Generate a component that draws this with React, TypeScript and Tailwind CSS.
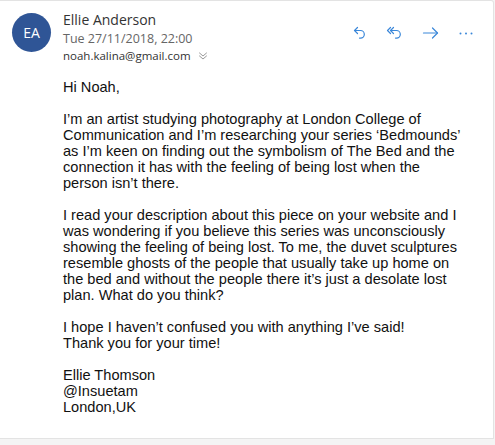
import React from "react";

const ReplyIcon = () => (
  <svg width="16" height="16" viewBox="0 0 16 16" fill="none" stroke="currentColor" strokeWidth="1.2" strokeLinecap="round" strokeLinejoin="round">
    <path d="M5.5 2.5 2.5 5.5l3 3" />
    <path d="M2.5 5.5h6a3.8 3.8 0 0 1 0 7.6H7.5" />
  </svg>
);

const ReplyAllIcon = () => (
  <svg width="18" height="16" viewBox="0 0 18 16" fill="none" stroke="currentColor" strokeWidth="1.2" strokeLinecap="round" strokeLinejoin="round">
    <path d="M4.5 2.5 1.5 5.5l3 3" />
    <path d="M7.5 2.5 4.5 5.5l3 3" />
    <path d="M4.5 5.5h6a3.8 3.8 0 0 1 0 7.6H9.5" />
  </svg>
);

const ForwardIcon = () => (
  <svg width="18" height="16" viewBox="0 0 18 16" fill="none" stroke="currentColor" strokeWidth="1.2" strokeLinecap="round" strokeLinejoin="round">
    <path d="M1.5 8h14" />
    <path d="M10.5 3l5 5-5 5" />
  </svg>
);

const MoreIcon = () => (
  <svg width="16" height="16" viewBox="0 0 16 16" fill="currentColor">
    <circle cx="2.5" cy="8.5" r="1" />
    <circle cx="8" cy="8.5" r="1" />
    <circle cx="13.5" cy="8.5" r="1" />
  </svg>
);

const ChevronsDown = () => (
  <svg width="10" height="10" viewBox="0 0 10 10" fill="none" stroke="currentColor" strokeWidth="1" strokeLinecap="round" strokeLinejoin="round">
    <path d="M1.5 2 5 5l3.5-3" />
    <path d="M1.5 5 5 8l3.5-3" />
  </svg>
);

export default function App() {
  return (
    <div className="w-[495px] h-[445px] bg-[#f4f4f4] overflow-hidden">
      <div className="w-[494px] h-[439px] bg-white border-t border-r border-b border-[#e3e3e3] rounded-tr-[3px]">
        <div className="flex items-start pl-[12px] pt-[12px]">
          <div className="w-[39px] h-[39px] rounded-full bg-[#2f5596] flex items-center justify-center text-white text-[14px] font-['Open_Sans',sans-serif] shrink-0">
            EA
          </div>
          <div className="ml-[12px] mt-[-3px] font-['Open_Sans',sans-serif]">
            <div className="text-[14px] leading-[20px] text-[#333]">Ellie Anderson</div>
            <div className="text-[12.5px] leading-[17px] text-[#666]">Tue 27/11/2018, 22:00</div>
            <div className="flex items-center text-[11.5px] leading-[18px] text-[#333]">
              noah.kalina@gmail.com
              <span className="ml-[7px] text-[#999] flex"><ChevronsDown /></span>
            </div>
          </div>
          <div className="ml-auto mr-[19px] mt-[12px] flex items-center gap-[18px] text-[#3a87d9]">
            <ReplyIcon />
            <ReplyAllIcon />
            <ForwardIcon />
            <MoreIcon />
          </div>
        </div>
        <div className="pl-[63px] pt-[14px] text-[14.6px] leading-[16px] text-[#111] whitespace-nowrap font-['Liberation_Sans',Arial,sans-serif]">
          <p>Hi Noah,</p>
          <p className="mt-[16px]">
            I’m an artist studying photography at London College of
            <br />
            Communication and I’m researching your series ‘Bedmounds’
            <br />
            as I’m keen on finding out the symbolism of The Bed and the
            <br />
            connection it has with the feeling of being lost when the
            <br />
            person isn’t there.
          </p>
          <p className="mt-[16px]">
            I read your description about this piece on your website and I
            <br />
            was wondering if you believe this series was unconsciously
            <br />
            showing the feeling of being lost. To me, the duvet sculptures
            <br />
            resemble ghosts of the people that usually take up home on
            <br />
            the bed and without the people there it’s just a desolate lost
            <br />
            plan. What do you think?
          </p>
          <p className="mt-[16px]">
            I hope I haven’t confused you with anything I’ve said!
            <br />
            Thank you for your time!
          </p>
          <p className="mt-[16px]">
            Ellie Thomson
            <br />
            @Insuetam
            <br />
            London,UK
          </p>
        </div>
      </div>
    </div>
  );
}
